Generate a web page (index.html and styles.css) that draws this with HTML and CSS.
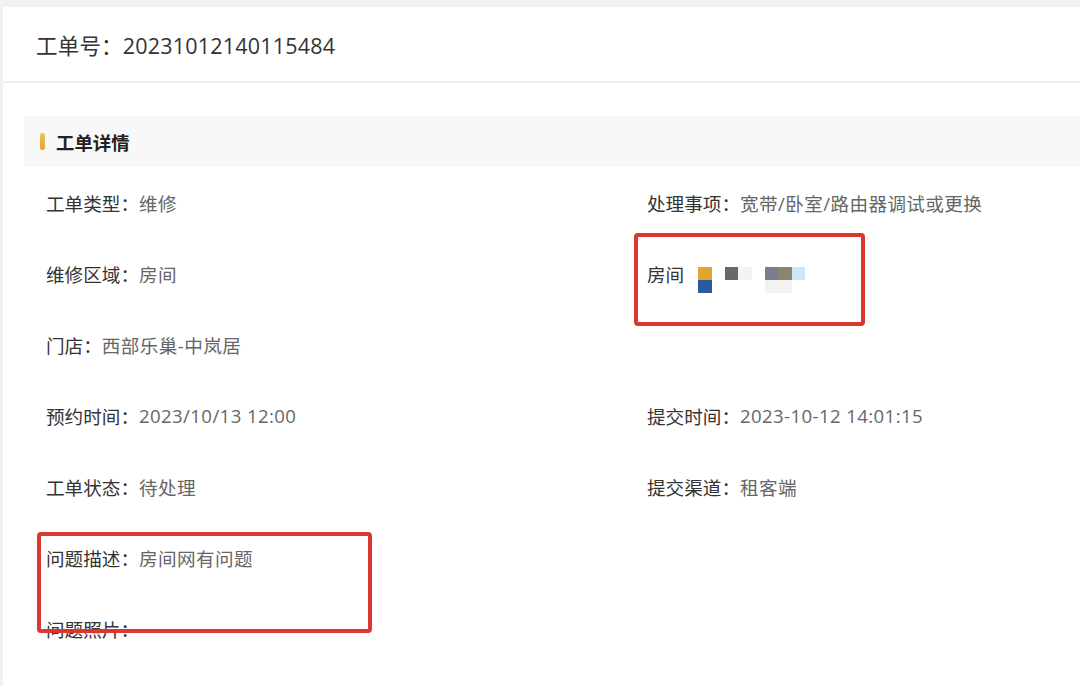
FILE: index.html
```html
<!DOCTYPE html>
<html lang="zh-CN">
<head>
<meta charset="utf-8">
<title>工单详情</title>
<link rel="stylesheet" href="styles.css">
</head>
<body>
<div class="page">
  <div class="card">
    <div class="order-head">工单号：20231012140115484</div>
    <div class="card-body">
      <div class="section-title"><span class="bar"></span><span>工单详情</span></div>
      <div class="grid">
        <div class="item"><span class="label">工单类型：</span><span class="value">维修</span></div>
        <div class="item"><span class="label">处理事项：</span><span class="value">宽带/卧室/路由器调试或更换</span></div>
        <div class="item"><span class="label">维修区域：</span><span class="value">房间</span></div>
        <div class="item"><span class="label">房间</span>
          <div class="mosaic">
            <i class="c-or"></i><i></i><i class="c-dg"></i><i class="c-lt"></i><i></i><i class="c-gb"></i><i class="c-br"></i><i class="c-lb"></i>
            <i class="c-bl"></i><i></i><i></i><i></i><i></i><i class="c-fa"></i><i class="c-fa"></i><i></i>
          </div>
        </div>
        <div class="item"><span class="label">门店：</span><span class="value">西部乐巢-中岚居</span></div>
        <div class="item"></div>
        <div class="item"><span class="label">预约时间：</span><span class="value">2023/10/13 12:00</span></div>
        <div class="item"><span class="label">提交时间：</span><span class="value">2023-10-12 14:01:15</span></div>
        <div class="item"><span class="label">工单状态：</span><span class="value">待处理</span></div>
        <div class="item"><span class="label">提交渠道：</span><span class="value">租客端</span></div>
        <div class="item"><span class="label">问题描述：</span><span class="value">房间网有问题</span></div>
        <div class="item"></div>
        <div class="item"><span class="label">问题照片：</span></div>
      </div>
    </div>
    <div class="mark mark-room"></div>
    <div class="mark mark-desc"></div>
  </div>
</div>
</body>
</html>
```

FILE: styles.css
```css
html, body {
  margin: 0;
  padding: 0;
  background: #f1f1f4;
  height: 100%;
  overflow: hidden;
}
.page {
  padding: 7px 0 0 3px;
  height: 100%;
  box-sizing: border-box;
}
.card {
  position: relative;
  background: #ffffff;
  height: 100%;
  font-family: "Open Sans", "Noto Sans CJK SC", sans-serif;
}
.order-head {
  height: 76px;
  box-sizing: border-box;
  display: flex;
  align-items: center;
  padding-left: 33px;
  font-size: 21.5px;
  letter-spacing: 0.2px;
  color: #333333;
  border-bottom: 2px solid #efefef;
}
.card-body {
  padding: 33px 0 0 21px;
}
.section-title {
  height: 51px;
  background: #f8f8f8;
  display: flex;
  align-items: center;
  gap: 11px;
  padding-left: 16px;
  font-size: 18.4px;
  font-weight: 700;
  color: #222222;
}
.bar {
  width: 5px;
  height: 17px;
  border-radius: 3px;
  background: linear-gradient(#f0c060, #e0a535);
}
.grid {
  display: grid;
  grid-template-columns: 601px 1fr;
  grid-auto-rows: 71px;
  padding-left: 22px;
}
.item {
  display: flex;
  align-items: center;
  font-size: 18.6px;
  white-space: nowrap;
}
.label {
  color: #333333;
}
.value {
  color: #666666;
  letter-spacing: 0.4px;
}
.mosaic {
  display: grid;
  grid-template-columns: repeat(8, 13.33px);
  grid-template-rows: repeat(2, 13.33px);
  margin-left: 14px;
  margin-top: 13px;
}
.mosaic i {
  display: block;
}
.c-or { background: #dea62d; }
.c-bl { background: #2c5a9f; }
.c-dg { background: #686868; }
.c-lt { background: #f3f3f3; }
.c-gb { background: #7c7b92; }
.c-br { background: #8b8570; }
.c-lb { background: #cfe5f9; }
.c-fa { background: #f1f3f0; }
.mark {
  position: absolute;
  border: 4px solid #d8382e;
  border-radius: 4px;
  box-sizing: border-box;
}
.mark-room {
  left: 631px;
  top: 226px;
  width: 231px;
  height: 93px;
}
.mark-desc {
  left: 34px;
  top: 525px;
  width: 335px;
  height: 101px;
}
```
